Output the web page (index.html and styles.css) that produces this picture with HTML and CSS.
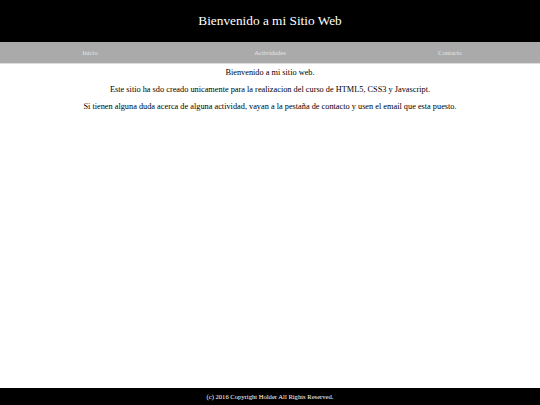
FILE: index.html
```html
<!DOCTYPE html>
<html lang="es">
<head>
<meta charset="utf-8">
<title>Bienvenido</title>
<link rel="stylesheet" href="styles.css">
</head>
<body>
<div class="page">
  <header class="top">
    <h1 class="title">Bienvenido a mi Sitio Web</h1>
  </header>
  <nav class="nav">
    <a class="nav-item" href="#">Inicio</a>
    <a class="nav-item" href="#">Actividades</a>
    <a class="nav-item" href="#">Contacto</a>
  </nav>
  <main class="content">
    <p>Bienvenido a mi sitio web.</p>
    <p>Este sitio ha sdo creado unicamente para la realizacion del curso de HTML5, CSS3 y Javascript.</p>
    <p>Si tienen alguna duda acerca de alguna actividad, vayan a la pestaña de contacto y usen el email que esta puesto.</p>
  </main>
  <footer class="foot">(c) 2016 Copyright Holder All Rights Reserved.</footer>
</div>
</body>
</html>
```
FILE: styles.css
```css
html, body {
  margin: 0;
  padding: 0;
  height: 100%;
}
body {
  font-family: "Liberation Serif", "Times New Roman", serif;
  background: #fff;
  color: #000;
}
.page {
  display: flex;
  flex-direction: column;
  min-height: 100%;
}
.top {
  background: #000;
  height: 42px;
  display: flex;
  align-items: center;
  justify-content: center;
}
.title {
  margin: 0;
  color: #fff;
  font-weight: normal;
  font-size: 13.3px;
}
.nav {
  background: #aaa;
  height: 21px;
  display: grid;
  grid-template-columns: 1fr 1fr 1fr;
  align-items: center;
  border-bottom: 1px solid #ddd;
}
.nav-item {
  text-align: center;
  color: #e6e6e6;
  text-decoration: none;
  font-size: 6.6px;
}
.content {
  flex: 1;
  text-align: center;
  font-size: 8.3px;
  padding-top: 4px;
}
.content p {
  margin: 0 0 7px;
  line-height: 10px;
}
.foot {
  background: #000;
  color: #fff;
  height: 17px;
  display: flex;
  align-items: center;
  justify-content: center;
  font-size: 6.6px;
}
```
